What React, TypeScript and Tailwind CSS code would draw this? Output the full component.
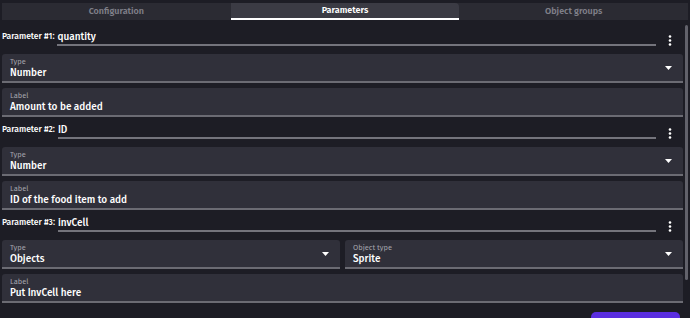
import React from "react";

const font = { fontFamily: '"Fira Sans", Roboto, "Noto Sans", sans-serif' };

function Kebab() {
  return (
    <div className="w-[27px] flex justify-center items-center pt-[2px]">
      <svg width="4" height="11" viewBox="0 0 4 11">
        <circle cx="2" cy="1.5" r="1.3" fill="#fff" />
        <circle cx="2" cy="5.5" r="1.3" fill="#fff" />
        <circle cx="2" cy="9.5" r="1.3" fill="#fff" />
      </svg>
    </div>
  );
}

function Arrow() {
  return (
    <svg width="7" height="4" viewBox="0 0 7 4" className="mr-[5px]">
      <path d="M0 0 L7 0 L3.5 4 Z" fill="#fff" />
    </svg>
  );
}

function Field({ label, value, select, className = "" }: { label: string; value: string; select?: boolean; className?: string }) {
  return (
    <div className={`h-[29px] bg-[#30303a] rounded-t-[3px] border-b-2 border-[#6b6b73] flex items-center pl-[8px] pr-[6px] ${className}`}>
      <div className="flex-1 flex flex-col leading-none pt-[1px]">
        <span className="text-[7.5px] text-[#a3a3ab] mb-[3px]">{label}</span>
        <span className="text-[10px] font-medium text-white">{value}</span>
      </div>
      {select && <Arrow />}
    </div>
  );
}

function Header({ n, name }: { n: number; name: string }) {
  return (
    <div className="h-[18px] flex items-end">
      <span className="text-[8.5px] font-medium text-white pb-[3px] pr-[3px]">Parameter #{n}:</span>
      <div className="flex-1 h-full border-b-2 border-[#74747c] flex items-end pb-[1px]">
        <span className="text-[10px] font-medium text-white leading-none pb-[1px]">{name}</span>
      </div>
      <Kebab />
    </div>
  );
}

export default function App() {
  return (
    <div style={font} className="w-[690px] h-[318px] overflow-hidden bg-[#1d1d25] relative">
      {/* tabs */}
      <div className="pt-[3px] px-[2px]">
        <div className="flex h-[17px] bg-[#2b2b33] text-[9px] font-semibold">
          <div className="flex-1 flex items-center justify-center text-[#7f7f88]">Configuration</div>
          <div className="flex-1 flex items-center justify-center text-white bg-[#3b3b44] rounded-tr-[4px] border-b-2 border-white">Parameters</div>
          <div className="flex-1 flex items-center justify-center text-[#7f7f88]">Object groups</div>
        </div>
      </div>

      <div className="flex">
        <div className="flex-1 pl-[2px] pr-[2px] pt-[8px] flex flex-col">
          <Header n={1} name="quantity" />
          <Field label="Type" value="Number" select className="mt-[8px]" />
          <Field label="Label" value="Amount to be added" className="mt-[5px]" />

          <div className="mt-[4px]" />
          <Header n={2} name="ID" />
          <Field label="Type" value="Number" select className="mt-[8px]" />
          <Field label="Label" value="ID of the food item to add" className="mt-[5px]" />

          <div className="mt-[4px]" />
          <Header n={3} name="invCell" />
          <div className="flex gap-[5px] mt-[8px]">
            <Field label="Type" value="Objects" select className="flex-1" />
            <Field label="Object type" value="Sprite" select className="flex-1" />
          </div>
          <Field label="Label" value="Put InvCell here" className="mt-[5px]" />
        </div>
        <div className="w-[5px] pt-[5px]">
          <div className="w-[3px] h-[255px] bg-[#62626b] rounded-full" />
        </div>
      </div>

      <div className="absolute left-[591px] top-[312px] w-[89px] h-[20px] bg-[#5a2ee0] rounded-[5px]" />
    </div>
  );
}
